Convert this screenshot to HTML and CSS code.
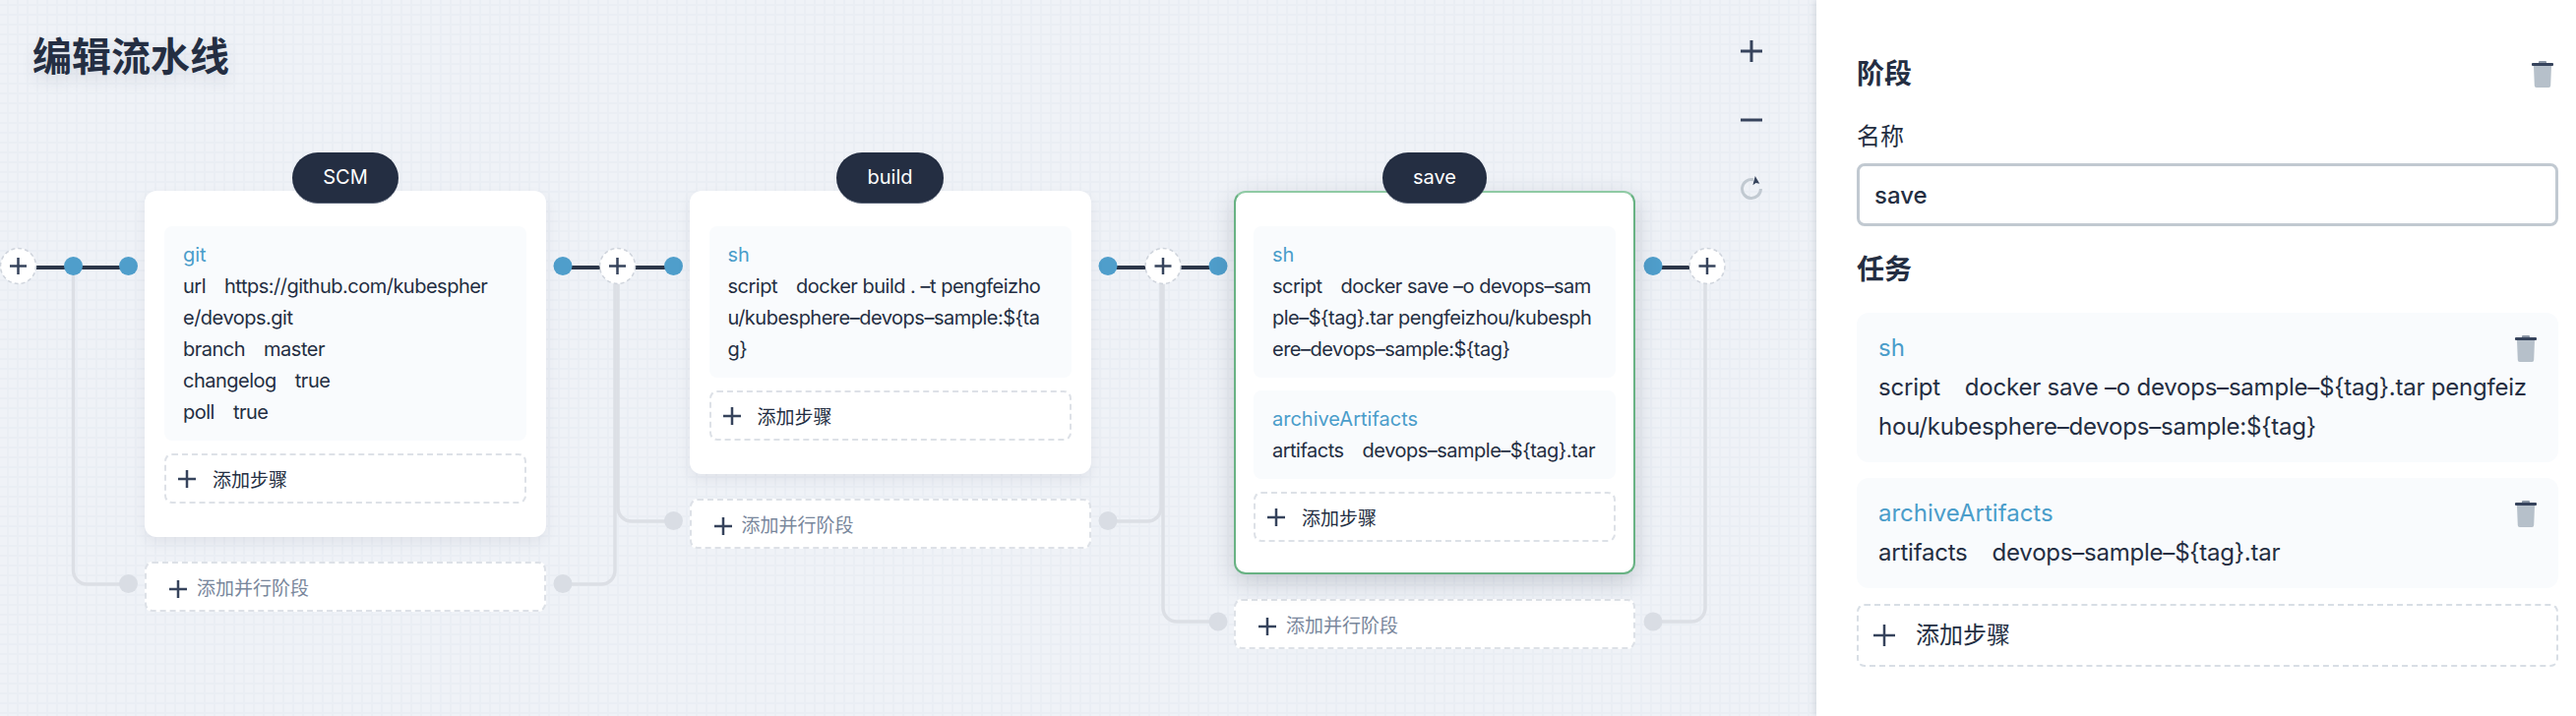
FILE: index.html
```html
<!DOCTYPE html>
<html lang="zh-CN">
<head>
<meta charset="utf-8">
<title>编辑流水线</title>
<link rel="stylesheet" href="styles.css">
</head>
<body>
<div class="app">
  <main class="canvas">
    <h1 class="page-title">编辑流水线</h1>

    <div class="zoom-tools">
      <svg class="tool" viewBox="0 0 22 22"><path class="tool-dark" d="M11 0v22M0 11h22"/></svg>
      <svg class="tool" viewBox="0 0 22 22"><path class="tool-dark" d="M0 11h22"/></svg>
      <svg class="tool" viewBox="0 0 22 22"><path class="tool-light" d="M13 1.700A9.500 9.500 0 1 0 20.500 11"/><path class="tool-arrow" d="M12.400 7.300L14.800-2L19.300 5.700L15.500 5Z"/></svg>
    </div>

    <svg class="wires" viewBox="0 0 1846 728">
      <g class="wire-grey">
        <path d="M74.500 272V580a14 14 0 0 0 14 14H130"/>
        <path d="M572 594H611a14 14 0 0 0 14-14V289"/>
        <path d="M628 289V516a14 14 0 0 0 14 14H684"/>
        <path d="M1126 530H1166a14 14 0 0 0 14-14V289"/>
        <path d="M1182 289V618a14 14 0 0 0 14 14H1238"/>
        <path d="M1680 632H1719a14 14 0 0 0 14-14V289"/>
      </g>
      <g class="wire-dark">
        <path d="M37 272H130"/>
        <path d="M572 272H684"/>
        <path d="M1126 272H1238"/>
        <path d="M1680 272H1717"/>
      </g>
      <g class="dot-grey">
        <circle cx="130.500" cy="593.500" r="9.500"/>
        <circle cx="572" cy="593.500" r="9.500"/>
        <circle cx="684.500" cy="529.500" r="9.500"/>
        <circle cx="1126" cy="529.500" r="9.500"/>
        <circle cx="1238" cy="632" r="9.500"/>
        <circle cx="1680" cy="632" r="9.500"/>
      </g>
      <g class="dot-blue">
        <circle cx="74.500" cy="270.500" r="9.500"/>
        <circle cx="130.500" cy="270.500" r="9.500"/>
        <circle cx="572" cy="270.500" r="9.500"/>
        <circle cx="684.500" cy="270.500" r="9.500"/>
        <circle cx="1126" cy="270.500" r="9.500"/>
        <circle cx="1238" cy="270.500" r="9.500"/>
        <circle cx="1680" cy="270.500" r="9.500"/>
      </g>
      <g class="add-node">
        <circle cx="18.500" cy="270.500" r="18"/>
        <circle cx="627.500" cy="270.500" r="18"/>
        <circle cx="1182" cy="270.500" r="18"/>
        <circle cx="1735" cy="270.500" r="18"/>
      </g>
      <g class="add-plus">
        <path d="M10 270.500h17M18.500 262v17"/>
        <path d="M619 270.500h17M627.500 262v17"/>
        <path d="M1173.500 270.500h17M1182 262v17"/>
        <path d="M1726.500 270.500h17M1735 262v17"/>
      </g>
    </svg>

    <div class="pipeline">
      <section class="stage">
        <div class="pill">SCM</div>
        <div class="card">
          <div class="step">
            <div class="step-name">git</div>
            <div>url<span class="sep"></span>https://github.com/kubespher<br>e/devops.git</div>
            <div>branch<span class="sep"></span>master</div>
            <div>changelog<span class="sep"></span>true</div>
            <div>poll<span class="sep"></span>true</div>
          </div>
          <div class="add-step">
            <svg class="plus" viewBox="0 0 18 18"><path d="M9 0v18M0 9h18"/></svg>
            <span>添加步骤</span>
          </div>
        </div>
        <div class="add-parallel">
          <svg class="plus plus-low" viewBox="0 0 18 18"><path d="M9 0v18M0 9h18"/></svg>
          <span>添加并行阶段</span>
        </div>
      </section>

      <section class="stage">
        <div class="pill">build</div>
        <div class="card">
          <div class="step">
            <div class="step-name">sh</div>
            <div>script<span class="sep"></span>docker build . –t pengfeizho<br>u/kubesphere–devops–sample:${ta<br>g}</div>
          </div>
          <div class="add-step">
            <svg class="plus" viewBox="0 0 18 18"><path d="M9 0v18M0 9h18"/></svg>
            <span>添加步骤</span>
          </div>
        </div>
        <div class="add-parallel">
          <svg class="plus plus-low" viewBox="0 0 18 18"><path d="M9 0v18M0 9h18"/></svg>
          <span>添加并行阶段</span>
        </div>
      </section>

      <section class="stage">
        <div class="pill">save</div>
        <div class="card card-active">
          <div class="step">
            <div class="step-name">sh</div>
            <div>script<span class="sep"></span>docker save –o devops–sam<br>ple–${tag}.tar pengfeizhou/kubesph<br>ere–devops–sample:${tag}</div>
          </div>
          <div class="step">
            <div class="step-name">archiveArtifacts</div>
            <div>artifacts<span class="sep"></span>devops–sample–${tag}.tar</div>
          </div>
          <div class="add-step">
            <svg class="plus" viewBox="0 0 18 18"><path d="M9 0v18M0 9h18"/></svg>
            <span>添加步骤</span>
          </div>
        </div>
        <div class="add-parallel">
          <svg class="plus plus-low" viewBox="0 0 18 18"><path d="M9 0v18M0 9h18"/></svg>
          <span>添加并行阶段</span>
        </div>
      </section>
    </div>
  </main>

  <aside class="panel">
    <header class="panel-head">
      <h2 class="panel-title">阶段</h2>
      <svg class="trash" viewBox="0 0 22 27"><path class="trash-knob" d="M7 2V1a1 1 0 0 1 1-1h6a1 1 0 0 1 1 1v1Z"/><path class="trash-body" d="M2 5h18l-.8 20a2 2 0 0 1-2 2H4.800a2 2 0 0 1-2-2Z"/><rect class="trash-lid" y="2" width="22" height="3" rx="1"/></svg>
    </header>
    <label class="field-label">名称</label>
    <div class="text-input">save</div>
    <h2 class="panel-title tasks-title">任务</h2>

    <div class="task">
      <div class="task-head">
        <span class="step-name">sh</span>
        <svg class="trash" viewBox="0 0 22 27"><path class="trash-knob" d="M7 2V1a1 1 0 0 1 1-1h6a1 1 0 0 1 1 1v1Z"/><path class="trash-body" d="M2 5h18l-.8 20a2 2 0 0 1-2 2H4.800a2 2 0 0 1-2-2Z"/><rect class="trash-lid" y="2" width="22" height="3" rx="1"/></svg>
      </div>
      <div>script<span class="sep-wide"></span>docker save –o devops–sample–${tag}.tar pengfeiz<br>hou/kubesphere–devops–sample:${tag}</div>
    </div>

    <div class="task">
      <div class="task-head">
        <span class="step-name">archiveArtifacts</span>
        <svg class="trash" viewBox="0 0 22 27"><path class="trash-knob" d="M7 2V1a1 1 0 0 1 1-1h6a1 1 0 0 1 1 1v1Z"/><path class="trash-body" d="M2 5h18l-.8 20a2 2 0 0 1-2 2H4.800a2 2 0 0 1-2-2Z"/><rect class="trash-lid" y="2" width="22" height="3" rx="1"/></svg>
      </div>
      <div>artifacts<span class="sep-wide"></span>devops–sample–${tag}.tar</div>
    </div>

    <div class="panel-add">
      <svg class="plus plus-big" viewBox="0 0 22 22"><path d="M11 0v22M0 11h22"/></svg>
      <span>添加步骤</span>
    </div>
  </aside>
</div>
</body>
</html>
```

FILE: styles.css
```css
* { box-sizing: border-box; }

html, body {
  margin: 0;
  height: 100%;
  overflow: hidden;
}

body {
  font-family: Inter, "Noto Sans CJK SC", sans-serif;
  color: #242e42;
  background: #fff;
}

.app {
  display: flex;
  width: 2618px;
  height: 728px;
}

/* Canvas */
.canvas {
  position: relative;
  flex: none;
  width: 1846px;
  height: 728px;
  overflow: hidden;
  background-color: #eff2f7;
  background-image:
    linear-gradient(#eaeef4 2px, transparent 2px),
    linear-gradient(90deg, #eaeef4 2px, transparent 2px);
  background-size: 10px 10px;
  background-position: 7px 4px;
}

.page-title {
  position: absolute;
  left: 33px;
  top: 30px;
  margin: 0;
  font-size: 40px;
  line-height: 56px;
  font-weight: 600;
  text-shadow: 0 8px 16px rgba(36, 46, 66, 0.1);
}

.zoom-tools {
  position: absolute;
  left: 1769px;
  top: 41px;
  display: flex;
  flex-direction: column;
  gap: 48px;
}

.tool { display: block; width: 22px; height: 22px; overflow: visible; fill: none; }
.tool-dark { stroke: #36435c; stroke-width: 3; }
.tool-light { stroke: #c1c9d1; stroke-width: 3; }
.tool-arrow { fill: #36435c; }

.wires {
  position: absolute;
  left: 0;
  top: 0;
  width: 1846px;
  height: 728px;
  fill: none;
}

.wire-grey path { stroke: #dcdfe5; stroke-width: 3.5; fill: none; }
.wire-dark path { stroke: #2b3548; stroke-width: 4; fill: none; }
.dot-grey circle { fill: #d9dde4; }
.dot-blue circle { fill: #4f9ecb; }
.add-node circle { fill: #fff; stroke: #cfd4dc; stroke-width: 1.5; stroke-dasharray: 4 3; }
.add-plus path { stroke: #36435c; stroke-width: 2.5; fill: none; }

.pipeline {
  position: absolute;
  left: 147px;
  top: 155px;
  display: flex;
  gap: 145.5px;
  align-items: flex-start;
}

.stage {
  display: flex;
  flex-direction: column;
  width: 408px;
}

.pill {
  position: relative;
  z-index: 1;
  align-self: center;
  height: 52px;
  padding: 0 31px;
  margin-bottom: -13px;
  border-radius: 26px;
  background: #242e42;
  border-bottom: 1px solid #5a6478;
  color: #fff;
  font-size: 20px;
  line-height: 50px;
  text-align: center;
}

.card {
  position: relative;
  display: flex;
  flex-direction: column;
  gap: 13px;
  padding: 36px 20px 34px;
  border-radius: 12px;
  background: #fff;
  box-shadow: 0 6px 14px rgba(36, 46, 66, 0.07);
}

.card-active {
  padding: 34px 18px 31px;
  border: 2px solid #68b283;
  border-top-color: #8fcaa4;
  box-shadow: 0 8px 24px rgba(36, 46, 66, 0.2);
}

.step {
  padding: 13px 19px;
  border-radius: 8px;
  background: #f9fbfd;
  font-size: 20px;
  line-height: 32px;
  letter-spacing: -0.5px;
  white-space: nowrap;
}

.step-name { color: #4a9dca; letter-spacing: 0; }

.sep { display: inline-block; width: 19px; }
.sep-wide { display: inline-block; width: 25px; }

.add-step {
  display: flex;
  align-items: center;
  gap: 17px;
  height: 51px;
  padding-left: 12px;
  border: 2px dashed #dde1e7;
  border-radius: 8px;
  background: #fff;
  font-size: 19px;
}

.plus { display: block; flex: none; width: 18px; height: 18px; fill: none; stroke: #36435c; stroke-width: 2.5; }
.plus-low { margin-top: 4px; }
.plus-big { width: 22px; height: 22px; }

.add-parallel {
  display: flex;
  align-items: center;
  gap: 10px;
  height: 51px;
  margin-top: 25px;
  padding-left: 23px;
  border: 2px dashed #dde1e7;
  border-radius: 8px;
  background: #fff;
  color: #79879c;
  font-size: 19px;
}

/* Side panel */
.panel {
  position: relative;
  flex: none;
  width: 772px;
  height: 728px;
  padding: 59px 18px 0 41px;
  background: #fff;
  box-shadow: -2px 0 6px rgba(36, 46, 66, 0.12);
  font-size: 24px;
  line-height: 40px;
}

.panel-head {
  display: flex;
  align-items: center;
  justify-content: space-between;
  padding-right: 5px;
  height: 32px;
}

.panel-title {
  margin: 0;
  font-size: 28px;
  line-height: 32px;
  font-weight: 600;
}

.field-label {
  display: block;
  margin-top: 31px;
  line-height: 34px;
}

.text-input {
  height: 64px;
  margin-top: 10px;
  padding-left: 15px;
  border: 3px solid #c1c9d1;
  border-radius: 8px;
  font-weight: 500;
  line-height: 60px;
}

.tasks-title {
  margin: 28px 0 28px;
}

.task {
  margin-bottom: 16px;
  padding: 16px 22px;
  border-radius: 12px;
  background: #f9fbfd;
  letter-spacing: -0.22px;
  white-space: nowrap;
}

.task-head {
  display: flex;
  align-items: center;
  justify-content: space-between;
  height: 40px;
}

.trash { display: block; flex: none; width: 22px; height: 27px; }
.trash-knob { fill: #8b96a5; }
.trash-body { fill: #b6c0ca; }
.trash-lid { fill: #36435c; }

.panel-add {
  display: flex;
  align-items: center;
  gap: 21px;
  height: 64px;
  padding-left: 15px;
  border: 2px dashed #d8dee5;
  border-radius: 8px;
}
```
